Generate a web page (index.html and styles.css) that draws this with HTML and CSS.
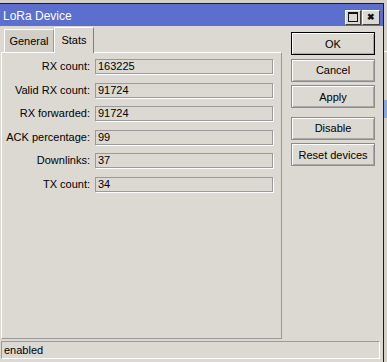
FILE: index.html
```html
<!DOCTYPE html>
<html lang="en">
<head>
<meta charset="UTF-8">
<meta name="viewport" content="width=device-width, initial-scale=1.0">
<title>LoRa Device</title>
<link rel="stylesheet" href="styles.css">
</head>
<body>

<div class="screen">
    <div class="window">
        <div class="titlebar">
            <span class="title">LoRa Device</span>
            <div class="title-btns">
                <div class="tbtn"><span class="max-icon"></span></div>
                <div class="tbtn close">&#10006;</div>
            </div>
        </div>

        <div class="main">
            <div class="left">
                <div class="tabs">
                    <div class="tab">General</div>
                    <div class="tab active">Stats</div>
                </div>
                <div class="panel">
                    <div class="fields">
                        <label>RX count:</label>
                        <div class="field">163225</div>
                        <label>Valid RX count:</label>
                        <div class="field">91724</div>
                        <label>RX forwarded:</label>
                        <div class="field">91724</div>
                        <label>ACK percentage:</label>
                        <div class="field">99</div>
                        <label>Downlinks:</label>
                        <div class="field">37</div>
                        <label>TX count:</label>
                        <div class="field">34</div>
                    </div>
                </div>
            </div>

            <div class="buttons">
                <button class="btn default">OK</button>
                <button class="btn">Cancel</button>
                <button class="btn">Apply</button>
                <button class="btn spaced">Disable</button>
                <button class="btn">Reset devices</button>
            </div>
        </div>

        <div class="status">enabled</div>
    </div>
    <div class="behind">
        <div class="behind-line"></div>
        <div class="behind-blue"></div>
    </div>
</div>

</body>
</html>
```

FILE: styles.css
```css
body {
    margin: 0;
    padding: 0;
    background: #d4d0c8;
    font-family: "Liberation Sans", Arial, sans-serif;
    font-size: 11px;
    color: #000;
}
.screen {
    display: flex;
    padding-top: 3px;
    height: 359px;
    overflow: hidden;
}
.window {
    width: 383px;
    height: 358px;
    border-top: 1px solid #1c1c1c;
    border-right: 1px solid #1c1c1c;
    background: #dcd9d2;
    display: flex;
    flex-direction: column;
}
.titlebar {
    height: 22px;
    background: #5c6fcf;
    color: #fff;
    display: flex;
    align-items: center;
    padding-left: 3px;
    font-size: 12px;
}
.title {
    margin-top: 1px;
}
.title-btns {
    margin-left: auto;
    margin-right: 3px;
    display: flex;
    gap: 1px;
    margin-top: 4px;
}
.tbtn {
    width: 14px;
    height: 13px;
    background: #dcd9d2;
    border: 1px solid #fff;
    border-right-color: #404040;
    border-bottom-color: #404040;
    display: flex;
    align-items: center;
    justify-content: center;
    font-size: 9px;
    font-weight: bold;
    color: #111;
}
.close {
    width: 16px;
}
.max-icon {
    width: 8px;
    height: 7px;
    border: 1px solid #111;
    border-top-width: 2px;
}
.main {
    height: 313px;
    display: flex;
}
.left {
    width: 281px;
    display: flex;
    flex-direction: column;
    margin-left: 1px;
}
.tabs {
    height: 26px;
    display: flex;
    align-items: flex-end;
    padding-left: 3px;
    position: relative;
    z-index: 1;
}
.tab {
    height: 22px;
    width: 48px;
    background: #d2cfc8;
    border-top: 1px solid #fff;
    border-left: 1px solid #fff;
    border-right: 1px solid #999;
    display: flex;
    align-items: center;
    justify-content: center;
}
.tab.active {
    height: 26px;
    width: 40px;
    background: #dcd9d2;
    border-right-color: #808080;
    margin-bottom: -1px;
    padding-bottom: 1px;
    box-sizing: border-box;
}
.panel {
    flex: 1;
    border-top: 1px solid #fff;
    border-left: 1px solid #fff;
    border-right: 1px solid #9a9a9a;
    border-bottom: 1px solid #9a9a9a;
    padding-top: 6px;
}
.fields {
    display: grid;
    grid-template-columns: 88px 178px;
    grid-auto-rows: 15px;
    column-gap: 5px;
    row-gap: 8.5px;
}
.fields label {
    text-align: right;
    line-height: 15px;
    white-space: nowrap;
}
.field {
    border: 1px solid #9a9a9a;
    box-shadow: 1px 1px 0 #fff;
    padding-left: 2px;
    line-height: 13px;
}
.buttons {
    width: 84px;
    margin-left: 9px;
    padding-top: 6px;
    display: flex;
    flex-direction: column;
    gap: 3.5px;
}
.btn {
    height: 23px;
    background: #dcd9d2;
    border: 1px solid #8c8c8c;
    box-shadow: inset 1px 1px 0 #fff, inset -1px -1px 0 #a8a8a8;
    font-family: "Liberation Sans", Arial, sans-serif;
    font-size: 11px;
    color: #000;
    padding: 0;
}
.btn.default {
    border-color: #000;
}
.btn.spaced {
    margin-top: 5px;
}
.status {
    margin: 2px 3px 3px 1px;
    height: 18px;
    box-sizing: border-box;
    border-top: 1px solid #9a9a9a;
    border-left: 1px solid #9a9a9a;
    border-bottom: 1px solid #fff;
    border-right: 1px solid #fff;
    padding-left: 2px;
    line-height: 16px;
}
.behind {
    width: 3px;
    background: #d4d0c8;
    display: flex;
    flex-direction: column;
}
.behind-line {
    height: 1px;
    background: #fff;
    margin-top: 48px;
}
.behind-blue {
    height: 18px;
    background: #8fa6d8;
    margin-top: 48px;
}
```
